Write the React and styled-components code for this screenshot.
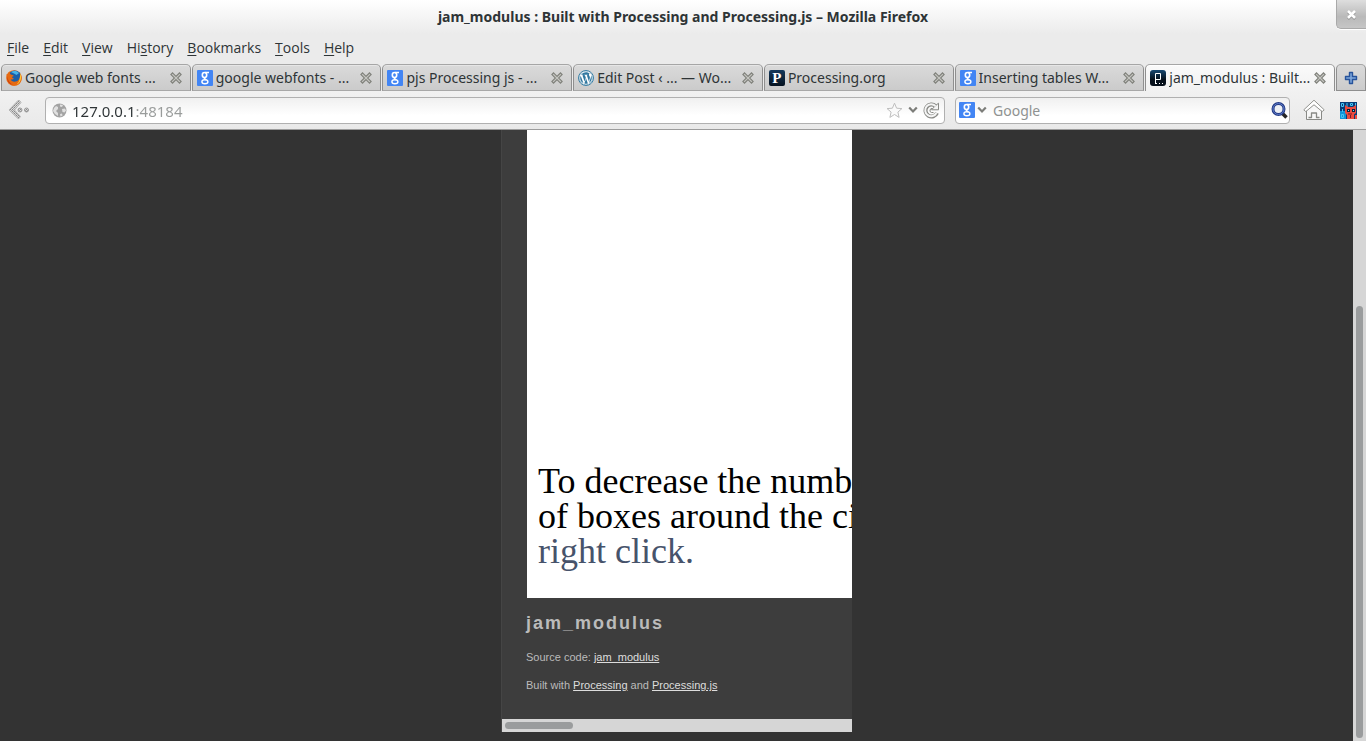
import React from "react";
import styled, { createGlobalStyle } from "styled-components";
import { FaWordpress } from "react-icons/fa";

const GlobalStyle = createGlobalStyle`
  *, *::before, *::after { box-sizing: border-box; }
  body {
    margin: 0;
    background: #333333;
    color: #2e3436;
    font-family: "Noto Sans", "Open Sans", sans-serif;
    font-size: 14px;
    line-height: 20px;
  }
  button, input { font: inherit; color: inherit; }
  button { border: 0; padding: 0; background: none; }
  svg { display: block; flex: none; }
`;

const Window = styled.div`
  display: flex;
  flex-direction: column;
  min-height: 100vh;
`;

const Chrome = styled.header`
  background: linear-gradient(#ffffff 0, #ebebeb 34px, #ebebeb 100%);
`;

const TitleBar = styled.div`
  display: grid;
  grid-template-columns: 30px 1fr 30px;
  height: 36px;
`;

const Title = styled.h1`
  grid-column: 2;
  margin: 0;
  text-align: center;
  font-size: 14px;
  line-height: 34px;
  font-weight: 700;
  white-space: nowrap;
  overflow: hidden;
`;

const WindowClose = styled.button`
  display: grid;
  place-items: center;
  height: 29px;
  border: 1px solid #a9a9a9;
  border-width: 0 0 1px 1px;
  border-radius: 0 0 0 5px;
  background: linear-gradient(#dedede, #b9b9b9 60%, #c6c6c6);
  box-shadow: 0 1px 0 #ffffff;
`;

const MenuBar = styled.nav`
  display: flex;
  gap: 14px;
  height: 28px;
  padding: 2px 7px 0;
  font-family: "Open Sans", "Noto Sans", sans-serif;
`;

const MenuItem = styled.button`
  height: 20px;
  u { text-underline-offset: 2px; text-decoration-thickness: 1px; }
`;

const TabStrip = styled.div`
  display: flex;
  height: 27px;
`;

const Tab = styled.div`
  display: flex;
  align-items: center;
  flex: 1 1 0;
  min-width: 0;
  gap: 3px;
  margin: 0 0 0 1px;
  padding: 0 8px 0 4px;
  border: 1px solid #8f8f8f;
  border-top-color: #a6a6a6;
  border-bottom: ${(p) => (p.$active ? "0" : "1px solid #a8a8a8")};
  border-radius: 5px 5px 0 0;
  background: ${(p) =>
    p.$active ? "linear-gradient(#fafafa, #f1f1f1)" : "linear-gradient(#dadada, #cbcbcb)"};
  box-shadow: inset 0 1px 0 ${(p) => (p.$active ? "#ffffff" : "#e6e6e6")};
`;

const TabLabel = styled.button`
  display: flex;
  align-items: center;
  gap: 3px;
  flex: 1;
  min-width: 0;
  text-align: left;
`;

const TabText = styled.span`
  flex: 1;
  min-width: 0;
  overflow: hidden;
  white-space: nowrap;
`;

const NewTab = styled.button`
  display: grid;
  place-items: center;
  width: 30px;
  margin-left: 1px;
  border: 1px solid #8f8f8f;
  border-top-color: #a6a6a6;
  border-radius: 5px 5px 0 0;
  background: linear-gradient(#dadada, #cbcbcb);
`;

const Toolbar = styled.div`
  display: flex;
  align-items: center;
  height: 39px;
  padding: 0 9px 0 8px;
  border-bottom: 1px solid #9c9c9c;
  background: linear-gradient(#f1f1f1, #e9e9e9);
`;

const IconButton = styled.button`
  display: grid;
  place-items: center;
  flex: none;
`;

const ToolbarActions = styled.div`
  display: flex;
  align-items: center;
  gap: 15px;
`;

const Field = styled.div`
  display: flex;
  align-items: center;
  height: 27px;
  border: 1px solid #b0b0b0;
  border-radius: 4px;
  background: linear-gradient(#f0f0f0, #ffffff 70%);
`;

const AddressField = styled(Field)`
  flex: 1;
  margin: 0 10px 0 15px;
  padding: 0 4px 0 6px;
  gap: 5px;
`;

const SearchField = styled(Field)`
  width: 335px;
  margin-right: 13px;
  padding: 0 1px 0 3px;
  gap: 2px;
`;

const TextInput = styled.input`
  flex: 1;
  min-width: 0;
  height: 24px;
  padding: 1px 0 0;
  border: 0;
  outline: 0;
  background: transparent;
  &::placeholder { color: #8f9291; opacity: 1; }
`;

const AddressInput = styled(TextInput)`
  font-size: 15px;
  background: linear-gradient(to right, #2e3436 64px, #999c9b 64px);
  background-clip: text;
  -webkit-background-clip: text;
  -webkit-text-fill-color: transparent;
`;

const SearchInput = styled(TextInput)`
  padding-left: 4px;
`;

const ProcessingMark = styled.span`
  flex: none;
  width: 16px;
  height: 16px;
  border-radius: 2px;
  background: linear-gradient(#14395c, #06121f);
  color: #ffffff;
  font: 700 15px/16px "Liberation Serif", serif;
  text-align: center;
`;

const Viewport = styled.div`
  display: flex;
  flex: 1;
`;

const Page = styled.main`
  flex: 1;
  min-width: 0;
  padding-bottom: 9px;
  display: flex;
  justify-content: center;
  background: #333333;
`;

const Panel = styled.section`
  display: flex;
  flex-direction: column;
  width: 351px;
  border-left: 1px solid #454545;
  background: #3d3d3d;
  overflow: hidden;
  color: #bbbbbb;
  font: 11px/14px "Liberation Sans", sans-serif;
`;

const Sketch = styled.div`
  display: flex;
  flex-direction: column;
  justify-content: flex-end;
  height: 468px;
  margin-left: 25px;
  padding: 0 0 29px 11px;
  overflow: hidden;
  background: #ffffff;
  color: #000000;
  font: 36px/35px "Liberation Serif", serif;
  white-space: nowrap;
`;

const SketchLine = styled.span`
  color: ${(p) => (p.$accent ? "#47536b" : "#000000")};
`;

const Details = styled.div`
  flex: 1;
  padding: 15px 24px 0;
`;

const SketchName = styled.h2`
  margin: 0 0 17px;
  font-size: 18px;
  line-height: 20px;
  letter-spacing: 2px;
`;

const Note = styled.p`
  margin: 0 0 14px;
`;

const NoteLink = styled.a`
  color: #dddddd;
  text-decoration: underline;
`;

const HorizontalTrack = styled.div`
  height: 13px;
  padding: 3px;
  background: #d6d6d6;
`;

const HorizontalThumb = styled.div`
  width: 68px;
  height: 7px;
  border-radius: 4px;
  background: #9a9c9d;
`;

const VerticalTrack = styled.div`
  display: grid;
  grid-template-rows: 176fr 432fr 3px;
  width: 13px;
  padding: 0 3px;
  background: #d6d6d6;
`;

const VerticalThumb = styled.div`
  grid-row: 2;
  border-radius: 4px;
  background: #9a9c9d;
`;

const FirefoxIcon = () => (
  <svg width="16" height="16" viewBox="0 0 16 16">
    <circle cx="8" cy="8" r="7.800" fill="#e8701a" />
    <circle cx="8.800" cy="6.600" r="6.200" fill="#1b5fa8" />
    <path d="M5 2C7 .5 11 .4 13 3l-2.500 2L8 3.500z" fill="#49b3e8" />
    <path d="M.6 4C.2 10 3 15.800 8 15.800c4.500 0 8-3.500 7.600-8.500-.3-2-.8-3-1.600-4 .6 4-.7 7.500-4.300 8.300-2.600.5-4.700-.8-4.900-2.400 1 .5 2.400.4 3.200-.6-1.300-.2-2-.8-1.800-1.800l1.600-.9C7 5 5.800 4.700 4.800 4.500 3.500 3.700 3.700 2.600 4 1.600 2.900 2 2.100 2.800 1.800 3.800z" fill="#e66a12" />
    <path d="M14 3.500c2 4 .8 9.300-3.300 10.900 2.300-2 3.600-5 3.300-10.900z" fill="#ffd83c" />
    <path d="M1.500 6c0 4 2 7.200 5.500 8.500C3.500 15 .4 11 1.500 6z" fill="#c73a12" />
  </svg>
);

const GoogleIcon = () => (
  <svg width="16" height="16" viewBox="0 0 16 16" aria-hidden="true" fill="none" stroke="#fff">
    <rect width="16" height="16" rx="1" fill="#4285f4" stroke="none" />
    <ellipse cx="7.500" cy="5" rx="2.200" ry="2.500" strokeWidth="1.600" />
    <path d="M8 2.500h4M8.500 7.500L7.300 8.800 9.500 10" strokeWidth="1.300" />
    <ellipse cx="7.900" cy="11.800" rx="3" ry="2" strokeWidth="1.400" />
  </svg>
);

const WordpressIcon = () => (
  <svg width="16" height="16" viewBox="0 0 16 16">
    <circle cx="8" cy="8" r="7.500" fill="#ffffff" stroke="#3a7fa5" />
    <FaWordpress x="1" y="1" width="14" height="14" color="#3178a0" />
  </svg>
);

const CloseIcon = () => (
  <svg width="12" height="12" viewBox="0 0 12 12" fill="none" strokeLinecap="square">
    <path d="M2.500 2.500l7 7M9.500 2.500l-7 7" stroke="#7f807a" strokeWidth="3.400" />
    <path d="M2.500 2.500l7 7M9.500 2.500l-7 7" stroke="#c4c4c0" strokeWidth="1.200" />
  </svg>
);

const WindowCloseIcon = () => (
  <svg width="11" height="11" viewBox="0 0 11 11" fill="none">
    <path d="M2 3l7 7M9 3l-7 7" stroke="#8f8f8f" strokeWidth="2.500" />
    <path d="M2 2l7 7M9 2l-7 7" stroke="#fff" strokeWidth="2.500" />
  </svg>
);

const PlusIcon = () => (
  <svg width="14" height="14" viewBox="0 0 14 14">
    <path d="M5.500 1.500h3v4h4v3h-4v4h-3v-4h-4v-3h4z" fill="#7ba4d9" stroke="#27539b" strokeWidth="1.400" strokeLinejoin="round" />
  </svg>
);

const JsIcon = () => (
  <svg width="16" height="16" viewBox="0 0 16 16">
    <defs>
      <linearGradient id="js-tile" x2="0" y2="1">
        <stop stopColor="#174871" />
        <stop offset=".6" stopColor="#06101b" />
      </linearGradient>
    </defs>
    <rect width="16" height="16" rx="3" fill="url(#js-tile)" />
    <path d="M5.500 13V3.500h5v6h-5M5 13.500h2M9 13.500h1M12 13.500h1" fill="none" stroke="#fff" />
  </svg>
);

const BackIcon = () => (
  <svg width="22" height="22" viewBox="0 0 22 22">
    <defs>
      <pattern id="dots" width="2" height="2" patternUnits="userSpaceOnUse">
        <rect width="2" height="2" fill="#dadada" />
        <rect width="1" height="1" fill="#8a8a8a" />
        <rect x="1" y="1" width="1" height="1" fill="#a2a2a2" />
      </pattern>
    </defs>
    <path d="M10 1.500h1.500l1.500 2L6.500 11l6 6.500-1.500 2h-1L1 11z" fill="url(#dots)" stroke="#b5b5b5" />
    <circle cx="12" cy="11" r="2" fill="url(#dots)" stroke="#999" />
    <circle cx="18.500" cy="11" r="2" fill="url(#dots)" stroke="#999" />
  </svg>
);

const GlobeIcon = () => (
  <svg width="15" height="15" viewBox="0 0 15 15">
    <circle cx="7.500" cy="7.500" r="7" fill="#a3a3a3" />
    <path d="M2 5l2-2 2 1v2L4 8l2 2v3L3 11 1 8zM8 1.500l3 .5-1 2-2-.5zM10 6l3-.5 1 2-1.500 2-2-.5zM8 11l2-.5.5 2-2 1z" fill="#e0e0e0" />
  </svg>
);

const StarIcon = () => (
  <svg width="17" height="17" viewBox="0 0 17 17">
    <path d="M8.500 1.200l2.100 5 5.300.4-4 3.500 1.200 5.300-4.600-2.900-4.600 2.900 1.200-5.300-4-3.500 5.300-.4z" fill="#fafafa" stroke="#bebebe" strokeLinejoin="round" />
  </svg>
);

const ChevronIcon = () => (
  <svg width="10" height="8" viewBox="0 0 10 8">
    <path d="M1.200 1.500L5 5.500l3.800-4" fill="none" stroke="#7c7d79" strokeWidth="2.200" />
  </svg>
);

const ReloadIcon = () => (
  <svg width="17" height="17" viewBox="0 0 17 17" fill="none">
    <path d="M12.500 4A6 6 0 1 0 14 11" stroke="#888985" strokeWidth="4" />
    <path d="M8.500 7.800h7V1.200l-2.500 2z" fill="#f5f5f5" stroke="#888985" />
    <path d="M12.500 4A6 6 0 1 0 13.500 11" stroke="#f5f5f5" strokeWidth="2" />
    <path d="M10.500 10.500h-2a2 2 0 1 1 1-4" stroke="#888985" />
  </svg>
);

const SearchIcon = () => (
  <svg width="17" height="17" viewBox="0 0 17 17" fill="none">
    <path d="M11.500 11.500l4 4" stroke="#262626" strokeWidth="3.500" />
    <circle cx="7.500" cy="7" r="5.500" fill="#edf0f5" stroke="#253c87" strokeWidth="3" />
    <circle cx="7.500" cy="7" r="5.500" stroke="#5d7bc7" />
  </svg>
);

const HomeIcon = () => (
  <svg width="22" height="22" viewBox="0 0 22 22" strokeLinejoin="round">
    <path d="M3.500 11v9.500h15V11L11 5z" fill="#f7f7f7" stroke="#888985" />
    <path d="M11 1.200L.8 10.800l2 1.800L11 5.800l8.200 6.800 2-1.800z" fill="#fff" stroke="#92938f" />
    <path d="M5.500 18.500h3v-4.500h5v4.500h3" fill="none" stroke="#888985" strokeWidth="1.300" />
  </svg>
);

const CatIcon = () => (
  <svg width="17" height="17" viewBox="0 0 17 17">
    <path d="M0 0h17v17H0z" fill="#073c78" />
    <path d="M0 9h6v8H0z" fill="#1294d8" />
    <path d="M1.500 1.500h2v3h-2zM7 1v4M10.500 1.500h2v2h-2zM15.500 1v3M2.500 7v3M1.500 12.500h2v3h-2z" fill="none" stroke="#45c5f5" />
    <path d="M5 3l3 2h5l3-2v8l-2 1.500V17H7v-4L5 11zM15 13h2v4h-2z" fill="#ea4b3e" />
    <path d="M7 7h3v3H7zM12 7h3v3h-3z" fill="#06203b" />
    <path d="M8 8h1v1H8zM13 8h1v1h-1z" fill="#65d9ff" />
    <path d="M8 12h4M10.500 13v3" stroke="#7b1829" />
  </svg>
);

const favicons = {
  firefox: <FirefoxIcon />,
  google: <GoogleIcon />,
  wordpress: <WordpressIcon />,
  processing: <ProcessingMark aria-hidden="true">P</ProcessingMark>,
  js: <JsIcon />,
};

const tabs = [
  { icon: "firefox", label: "Google web fonts ..." },
  { icon: "google", label: "google webfonts - ..." },
  { icon: "google", label: "pjs Processing js - ..." },
  { icon: "wordpress", label: "Edit Post ‹ ... — Wo..." },
  { icon: "processing", label: "Processing.org" },
  { icon: "google", label: "Inserting tables W..." },
  { icon: "js", label: "jam_modulus : Built...", active: true },
];

const menus = [
  ["", "F", "ile"],
  ["", "E", "dit"],
  ["", "V", "iew"],
  ["Hi", "s", "tory"],
  ["", "B", "ookmarks"],
  ["", "T", "ools"],
  ["", "H", "elp"],
];

export default function App() {
  return (
    <Window>
      <GlobalStyle />
      <Chrome>
        <TitleBar>
          <Title>jam_modulus : Built with Processing and Processing.js – Mozilla Firefox</Title>
          <WindowClose aria-label="Close window"><WindowCloseIcon /></WindowClose>
        </TitleBar>
        <MenuBar>
          {menus.map(([before, key, after]) => (
            <MenuItem key={key + after}>{before}<u>{key}</u>{after}</MenuItem>
          ))}
        </MenuBar>
        <TabStrip role="tablist">
          {tabs.map((tab) => (
            <Tab key={tab.label} $active={tab.active}>
              <TabLabel role="tab" aria-selected={!!tab.active}>
                {favicons[tab.icon]}
                <TabText>{tab.label}</TabText>
              </TabLabel>
              <IconButton aria-label={`Close ${tab.label}`}><CloseIcon /></IconButton>
            </Tab>
          ))}
          <NewTab aria-label="New tab"><PlusIcon /></NewTab>
        </TabStrip>
        <Toolbar>
          <IconButton aria-label="Back"><BackIcon /></IconButton>
          <AddressField>
            <GlobeIcon />
            <AddressInput aria-label="Address" defaultValue="127.0.0.1:48184" />
            <IconButton aria-label="Bookmark"><StarIcon /></IconButton>
            <IconButton aria-label="History"><ChevronIcon /></IconButton>
            <IconButton aria-label="Reload"><ReloadIcon /></IconButton>
          </AddressField>
          <SearchField>
            <GoogleIcon />
            <IconButton aria-label="Choose search engine"><ChevronIcon /></IconButton>
            <SearchInput aria-label="Search" placeholder="Google" />
            <IconButton aria-label="Search"><SearchIcon /></IconButton>
          </SearchField>
          <ToolbarActions>
            <IconButton aria-label="Home"><HomeIcon /></IconButton>
            <IconButton aria-label="Add-on"><CatIcon /></IconButton>
          </ToolbarActions>
        </Toolbar>
      </Chrome>
      <Viewport>
        <Page>
          <Panel>
            <Sketch>
              <SketchLine>To decrease the number</SketchLine>
              <SketchLine>of boxes around the circle,</SketchLine>
              <SketchLine $accent>right click.</SketchLine>
            </Sketch>
            <Details>
              <SketchName>jam_modulus</SketchName>
              <Note>Source code: <NoteLink href="#source">jam_modulus</NoteLink></Note>
              <Note>
                Built with <NoteLink href="#processing">Processing</NoteLink> and{" "}
                <NoteLink href="#processing-js">Processing.js</NoteLink>
              </Note>
            </Details>
            <HorizontalTrack><HorizontalThumb /></HorizontalTrack>
          </Panel>
        </Page>
        <VerticalTrack><VerticalThumb /></VerticalTrack>
      </Viewport>
    </Window>
  );
}
